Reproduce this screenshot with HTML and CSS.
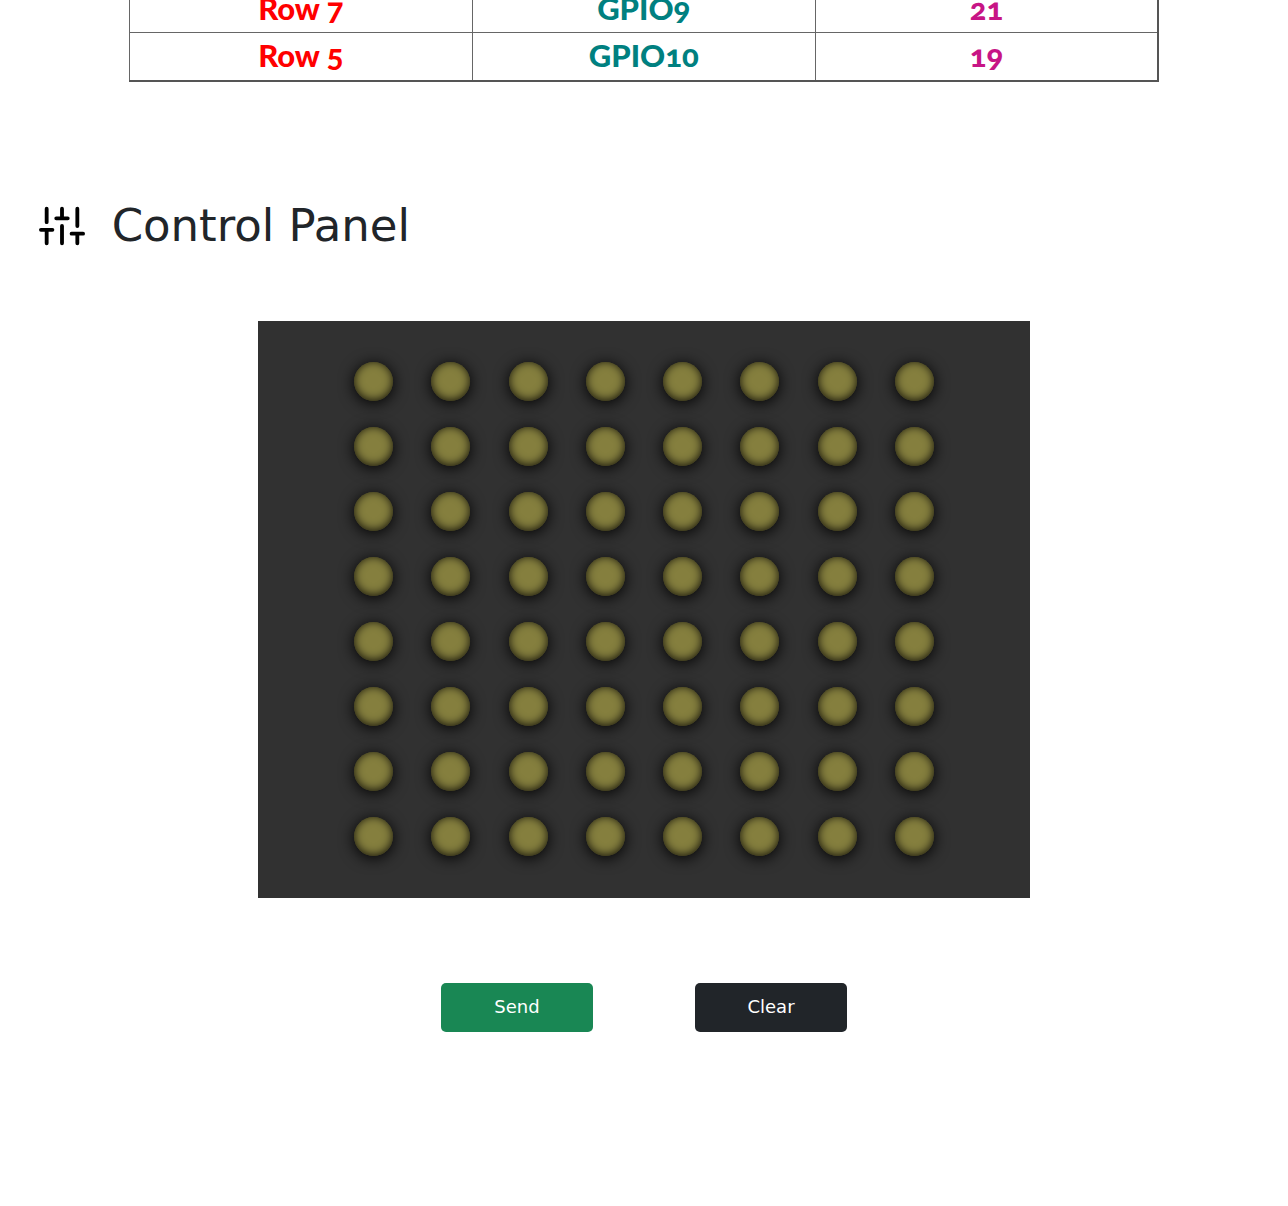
FILE: index.html
```html
<!DOCTYPE html>
<html lang="en">
<head>
<meta charset="utf-8">
<meta name="viewport" content="width=device-width, initial-scale=1">
<title>LED Matrix Control Panel</title>
<link rel="stylesheet" href="styles.css">
</head>
<body>
<main>
  <table class="pins">
    <tbody>
      <tr><td class="pin-row">Row 7</td><td class="pin-gpio">GPIO9</td><td class="pin-number">21</td></tr>
      <tr><td class="pin-row">Row 5</td><td class="pin-gpio">GPIO10</td><td class="pin-number">19</td></tr>
    </tbody>
  </table>

  <header class="heading">
    <svg class="heading-icon" viewBox="0 0 24 24" aria-hidden="true">
      <path d="M4 21v-7M4 10V3M12 21v-9M12 8V3M20 21v-5M20 12V3M1 14h6M9 8h6M17 16h6"/>
    </svg>
    <h1>Control Panel</h1>
  </header>

  <section class="matrix" id="matrix" aria-label="LED matrix"></section>

  <div class="actions">
    <button type="button" class="action send">Send</button>
    <button type="button" class="action clear" id="clear">Clear</button>
  </div>
</main>
<script src="matrix.js"></script>
</body>
</html>
```
FILE: styles.css
```css
* {
  box-sizing: border-box;
}

body {
  margin: 0;
  overflow-x: hidden;
  background: #fff;
  color: #212529;
  font-family: "DejaVu Sans", sans-serif;
}

main {
  display: flow-root;
  padding-bottom: 172px;
}

/* Pin table */
.pins {
  width: 80%;
  margin: -16px auto 0;
  table-layout: fixed;
  border-collapse: collapse;
  border-right: 2px solid #555;
  border-bottom: 2px solid #555;
  font: 900 31px/44px Lato, sans-serif;
  font-variant-numeric: oldstyle-nums;
  text-align: center;
}

.pins td {
  height: 48px;
  padding: 0 0 2px;
  border: 1px solid #666;
}

.pins td:last-child {
  border-right: 2px solid #555;
}

.pins tr:last-child td {
  border-bottom: 2px solid #555;
}

.pin-row { color: #f00; }
.pin-gpio { color: #008080; }
.pin-number { color: #c71585; }

/* Section heading */
.heading {
  display: flex;
  align-items: center;
  gap: 27px;
  margin-top: 117px;
  padding: 0 3%;
}

.heading-icon {
  width: 46px;
  height: 46px;
  fill: none;
  stroke: #000;
  stroke-width: 2;
  stroke-linecap: round;
  stroke-linejoin: round;
}

h1 {
  margin: 0;
  font-size: 45px;
  font-weight: 400;
  line-height: 54px;
}

/* LED matrix */
.matrix {
  display: grid;
  grid-template-columns: repeat(8, 1fr);
  grid-auto-rows: 65px;
  place-items: center;
  width: 60%;
  margin: 68px auto 0;
  padding: 28px 6% 29px;
  background: #313131;
}

.led {
  width: 39px;
  height: 39px;
  padding: 0;
  border: 0;
  border-radius: 50%;
  background: #857f3e;
  box-shadow: 0 2px 15px #000, inset 0 -1px 10px rgb(0 0 0 / 85%);
  cursor: pointer;
}

.led[aria-pressed="true"] {
  background: #fff04a;
}

/* Actions */
.actions {
  display: flex;
  justify-content: center;
  gap: 102px;
  margin-top: 85px;
}

.action {
  width: 152px;
  height: 49px;
  padding: 0 0 2px;
  border: 0;
  border-radius: 5px;
  color: #fff;
  font: 18px/27px "DejaVu Sans", sans-serif;
  cursor: pointer;
}

.send { background: #198754; }
.clear { background: #212529; }
```
FILE: matrix.js
```js
const matrix = document.getElementById("matrix");

for (let row = 1; row <= 8; row++) {
  for (let column = 1; column <= 8; column++) {
    const led = document.createElement("button");
    led.type = "button";
    led.className = "led";
    led.setAttribute("aria-label", `Row ${row}, column ${column}`);
    led.setAttribute("aria-pressed", "false");
    led.addEventListener("click", () => {
      const lit = led.getAttribute("aria-pressed") === "true";
      led.setAttribute("aria-pressed", String(!lit));
    });
    matrix.append(led);
  }
}

document.getElementById("clear").addEventListener("click", () => {
  matrix.querySelectorAll(".led").forEach((led) => led.setAttribute("aria-pressed", "false"));
});
```
